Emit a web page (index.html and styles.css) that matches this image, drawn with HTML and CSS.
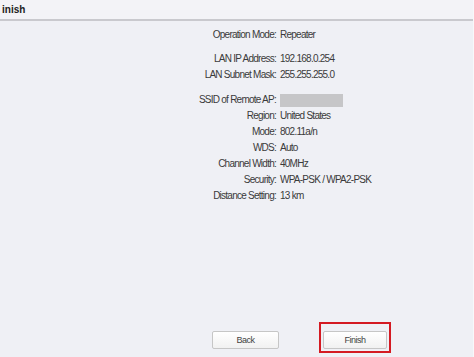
FILE: index.html
```html
<!DOCTYPE html>
<html lang="en">
<head>
    <meta charset="UTF-8">
    <meta name="viewport" content="width=device-width, initial-scale=1.0">
    <title>Finish</title>
    <link rel="stylesheet" href="styles.css">
</head>
<body>
    <div class="page">
        <!-- Title bar -->
        <div class="title-bar">inish</div>

        <!-- Summary -->
        <div class="summary">
            <div class="label">Operation Mode:</div><div class="value">Repeater</div>
            <div class="spacer"></div>
            <div class="label">LAN IP Address:</div><div class="value">192.168.0.254</div>
            <div class="label">LAN Subnet Mask:</div><div class="value">255.255.255.0</div>
            <div class="spacer big"></div>
            <div class="label">SSID of Remote AP:</div><div class="value"><span class="hidden-box"></span></div>
            <div class="label">Region:</div><div class="value">United States</div>
            <div class="label">Mode:</div><div class="value">802.11a/n</div>
            <div class="label">WDS:</div><div class="value">Auto</div>
            <div class="label">Channel Width:</div><div class="value">40MHz</div>
            <div class="label">Security:</div><div class="value">WPA-PSK / WPA2-PSK</div>
            <div class="label">Distance Setting:</div><div class="value">13 km</div>
        </div>

        <!-- Buttons -->
        <div class="button-bar">
            <button class="btn back">Back</button>
            <div class="highlight">
                <button class="btn">Finish</button>
            </div>
        </div>
    </div>
</body>
</html>
```

FILE: styles.css
```css
* {
    margin: 0;
    padding: 0;
    box-sizing: border-box;
}

body {
    font-family: "Liberation Sans", Arial, sans-serif;
    background-color: #eff0f5;
    color: #3a3a3a;
}

.page {
    display: flex;
    flex-direction: column;
    height: 357px;
    border-right: 1px solid #f8f8fa;
}

/* Title bar */
.title-bar {
    height: 21px;
    line-height: 19px;
    padding-left: 2px;
    font-size: 10px;
    font-weight: bold;
    color: #222;
    background-color: #f3f3f7;
    border-bottom: 2px solid #c9c9ce;
}

/* Summary grid */
.summary {
    display: grid;
    grid-template-columns: 276px 1fr;
    column-gap: 4px;
    padding-top: 6px;
    font-size: 10px;
    letter-spacing: -0.75px;
}

.label,
.value {
    height: 16px;
    line-height: 16px;
    white-space: nowrap;
}

.label {
    text-align: right;
}

.spacer {
    grid-column: 1 / 3;
    height: 8px;
}

.spacer.big {
    height: 9px;
}

.hidden-box {
    display: inline-block;
    width: 63px;
    height: 13px;
    margin-top: 2px;
    vertical-align: top;
    background-color: #c6c6c8;
}

/* Buttons */
.button-bar {
    margin-top: auto;
    display: flex;
    align-items: flex-end;
    gap: 40px;
    padding-left: 212px;
    padding-bottom: 4px;
}

.btn {
    width: 64px;
    height: 18px;
    font-family: "Liberation Sans", Arial, sans-serif;
    font-size: 9px;
    letter-spacing: -0.5px;
    color: #444;
    background: linear-gradient(#ffffff, #f1f1f1);
    border: 1px solid #c6c6c6;
    border-radius: 2px;
}

.btn.back {
    width: 67px;
    margin-bottom: 4px;
}

.highlight {
    border: 2px solid #d41a22;
    padding: 5px 2px 2px 2px;
}
```
